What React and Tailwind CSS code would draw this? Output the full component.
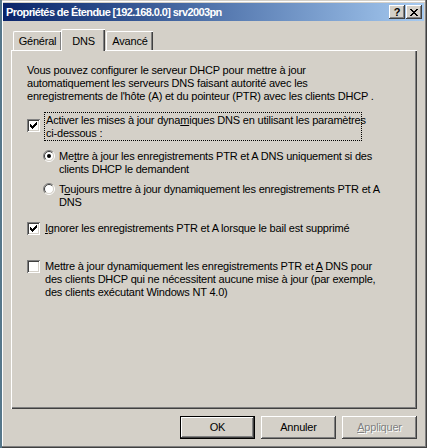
import React from 'react';

const font = { fontFamily: '"Liberation Sans", Arial, sans-serif' };

const raised = 'shadow-[inset_-1px_-1px_#404040,inset_1px_1px_#ffffff,inset_-2px_-2px_#808080,inset_2px_2px_#d4d0c8]';

const CheckBox = ({ checked }) => (
    <div className="w-[13px] h-[13px] shrink-0 bg-white shadow-[inset_1px_1px_#808080,inset_-1px_-1px_#ffffff,inset_2px_2px_#404040,inset_-2px_-2px_#d4d0c8] relative">
        {checked && (
            <svg width="7" height="7" viewBox="0 0 7 7" className="absolute left-[3px] top-[3px]" shapeRendering="crispEdges">
                <path fill="#000" d="M6 0h1v1h-1zM5 1h2v1h-2zM0 2h1v1h-1zM4 2h3v1h-3zM0 3h2v1h-2zM3 3h3v1h-3zM0 4h5v1h-5zM1 5h3v1h-3zM2 6h1v1h-1z" />
            </svg>
        )}
    </div>
);

const Radio = ({ checked }) => (
    <svg width="12" height="12" viewBox="0 0 12 12" className="shrink-0">
        <circle cx="6" cy="6" r="4.5" fill="#ffffff" />
        <path d="M2.1 9.9 A5.5 5.5 0 0 1 9.9 2.1" stroke="#808080" strokeWidth="1" fill="none" />
        <path d="M9.9 2.1 A5.5 5.5 0 0 1 2.1 9.9" stroke="#ffffff" strokeWidth="1" fill="none" />
        <path d="M2.8 9.2 A4.5 4.5 0 0 1 9.2 2.8" stroke="#404040" strokeWidth="1" fill="none" />
        <path d="M9.2 2.8 A4.5 4.5 0 0 1 2.8 9.2" stroke="#d4d0c8" strokeWidth="1" fill="none" />
        {checked && <circle cx="6" cy="6" r="2" fill="#000" />}
    </svg>
);

const Button = ({ children, isDefault, disabled }) => (
    <div className={`w-[75px] h-[23px] flex items-center justify-center ${isDefault ? 'border border-black' : ''}`}>
        <div className={`w-full h-full flex items-center justify-center ${raised} ${disabled ? 'text-[#808080] [text-shadow:1px_1px_#ffffff]' : 'text-black'}`}>
            {children}
        </div>
    </div>
);

export default function App() {
    return (
        <div
            className="w-[427px] h-[448px] bg-[#d4d0c8] border-l-2 border-l-[#56778a] pt-[3px] pr-[3px] pb-[2px] pl-[1px] flex flex-col text-[11px] tracking-[-0.2px] text-black shadow-[inset_-1px_-1px_#404040,inset_-2px_-2px_#808080,inset_0_1px_#d4d0c8,inset_1px_2px_#ffffff]"
            style={font}
        >
            {/* Title bar */}
            <div className="h-[18px] bg-gradient-to-r from-[#0a246a] to-[#a6caf0] flex items-center pl-[3px] pr-[2px]">
                <span className="text-white font-bold text-[11px] tracking-[-0.6px] whitespace-nowrap">
                    Propriétés de Étendue [192.168.0.0] srv2003pn
                </span>
                <div className="ml-auto flex gap-[1px]">
                    <div className={`w-[16px] h-[14px] bg-[#d4d0c8] ${raised} flex items-center justify-center font-bold text-[11px] leading-none tracking-normal`}>?</div>
                    <div className={`w-[16px] h-[14px] bg-[#d4d0c8] ${raised} flex items-center justify-center`}>
                        <svg width="8" height="7" viewBox="0 0 8 7" shapeRendering="crispEdges">
                            <path fill="#000" d="M0 0h2v1h-2zM6 0h2v1h-2zM1 1h2v1h-2zM5 1h2v1h-2zM2 2h4v1h-4zM3 3h2v1h-2zM2 4h4v1h-4zM1 5h2v1h-2zM5 5h2v1h-2zM0 6h2v1h-2zM6 6h2v1h-2z" />
                        </svg>
                    </div>
                </div>
            </div>

            {/* Tabs */}
            <div className="mt-[8px] ml-[10px] flex items-end h-[21px]">
                <div className="w-[48px] h-[19px] border-t border-l border-white rounded-tl-[2px] shadow-[inset_-1px_0_#808080] flex items-center justify-center pt-[1px]">
                    Général
                </div>
                <div className="w-[44px] h-[22px] -mb-[1px] bg-[#d4d0c8] border-t border-l border-white rounded-tl-[2px] shadow-[inset_-1px_0_#404040,inset_-2px_0_#808080] flex items-start justify-center pt-[3px] relative z-10">
                    DNS
                </div>
                <div className="w-[47px] ml-[1px] h-[19px] border-t border-l border-white rounded-tl-[2px] shadow-[inset_-1px_0_#404040,inset_-2px_0_#808080] flex items-center justify-center pt-[1px]">
                    Avancé
                </div>
            </div>

            {/* Panel */}
            <div className="ml-[8px] mr-[7px] h-[359px] border-t border-l border-white shadow-[inset_-1px_-1px_#404040,inset_-2px_-2px_#808080] pl-[15px] pt-[13px] leading-[13px]">
                <p className="whitespace-nowrap">
                    Vous pouvez configurer le serveur DHCP pour mettre à jour<br />
                    automatiquement les serveurs DNS faisant autorité avec les<br />
                    enregistrements de l'hôte (A) et du pointeur (PTR) avec les clients DHCP .
                </p>

                <div className="mt-[9px] flex items-start gap-[4px]">
                    <div className="mt-[7px]"><CheckBox checked /></div>
                    <div className="w-[318px] h-[29px] border border-dotted border-black pl-[1px] pt-[1px] whitespace-nowrap">
                        Activer les mises à jour dyna<u>m</u>iques DNS en utilisant les paramètres<br />
                        ci-dessous :
                    </div>
                </div>

                <div className="mt-[9px] ml-[16px] flex items-start gap-[4px]">
                    <Radio checked />
                    <div className="whitespace-nowrap">
                        Me<u>t</u>tre à jour les enregistrements PTR et A DNS uniquement si des<br />
                        clients DHCP le demandent
                    </div>
                </div>

                <div className="mt-[7px] ml-[16px] flex items-start gap-[4px]">
                    <Radio />
                    <div className="whitespace-nowrap">
                        T<u>o</u>ujours mettre à jour dynamiquement les enregistrements PTR et A<br />
                        DNS
                    </div>
                </div>

                <div className="mt-[13px] flex items-start gap-[5px]">
                    <CheckBox checked />
                    <div className="whitespace-nowrap">
                        <u>I</u>gnorer les enregistrements PTR et A lorsque le bail est supprimé
                    </div>
                </div>

                <div className="mt-[25px] flex items-start gap-[5px]">
                    <CheckBox />
                    <div className="whitespace-nowrap">
                        Mettre à jour dynamiquement les enregistrements PTR et <u>A</u> DNS pour<br />
                        des clients DHCP qui ne nécessitent aucune mise à jour (par exemple,<br />
                        des clients exécutant Windows NT 4.0)
                    </div>
                </div>
            </div>

            {/* Buttons */}
            <div className="mt-[7px] mr-[7px] flex justify-end gap-[6px]">
                <Button isDefault>OK</Button>
                <Button>Annuler</Button>
                <Button disabled><span><u>A</u>ppliquer</span></Button>
            </div>
        </div>
    );
}
